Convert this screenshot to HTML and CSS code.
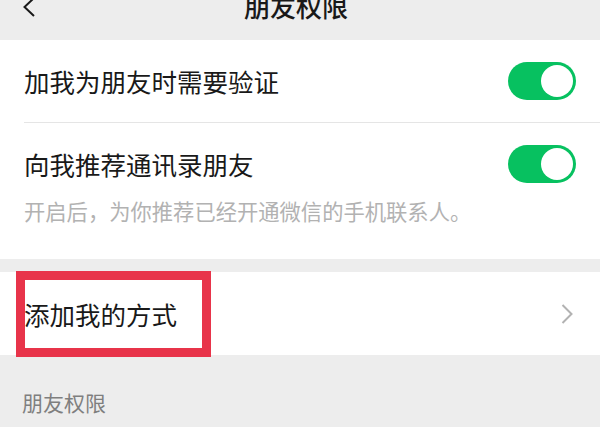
FILE: index.html
```html
<!DOCTYPE html>
<html lang="zh-CN">
<head>
<meta charset="utf-8">
<title>朋友权限</title>
<link rel="stylesheet" href="styles.css">
</head>
<body>
<div class="page">
  <header class="nav">
    <span class="nav-back">
      <svg width="14" height="20" viewBox="0 0 14 20"><path d="M12 1 L2.5 10 L12 19" fill="none" stroke="#191919" stroke-width="2"/></svg>
    </span>
    <h1 class="nav-title">朋友权限</h1>
    <span class="nav-side"></span>
  </header>

  <section class="group">
    <div class="cell cell-first">
      <span class="cell-label">加我为朋友时需要验证</span>
      <span class="switch"><span class="switch-knob"></span></span>
    </div>
    <div class="cell-multi">
      <div class="cell-line">
        <span class="cell-label">向我推荐通讯录朋友</span>
        <span class="switch"><span class="switch-knob"></span></span>
      </div>
      <p class="cell-desc">开启后，为你推荐已经开通微信的手机联系人。</p>
    </div>
  </section>

  <section class="group group-gap">
    <div class="cell cell-link">
      <span class="cell-label">添加我的方式</span>
      <svg class="arrow" width="12" height="20" viewBox="0 0 12 20"><path d="M1.5 1 L10.5 10 L1.5 19" fill="none" stroke="#b2b2b2" stroke-width="2"/></svg>
      <span class="highlight"></span>
    </div>
  </section>

  <div class="section-title">朋友权限</div>
</div>
</body>
</html>
```

FILE: styles.css
```css
* { box-sizing: border-box; }
html, body {
  margin: 0;
  padding: 0;
  background: #ededed;
  font-family: "Noto Sans CJK SC", "Noto Sans", sans-serif;
  color: #191919;
}
.page {
  width: 600px;
  height: 427px;
  overflow: hidden;
  background: #ededed;
}
.nav {
  height: 40px;
  display: grid;
  grid-template-columns: 1fr auto 1fr;
  align-items: center;
  padding: 0 0 30px 0;
}
.nav-back {
  display: flex;
  align-items: center;
  padding-left: 22px;
  height: 10px;
  margin-top: 2px;
}
.nav-title {
  margin: 0 8px 0 0;
  font-size: 26px;
  font-weight: 500;
  line-height: 26px;
  height: 10px;
  display: flex;
  align-items: center;
  color: #191919;
}
.group {
  background: #fff;
}
.group-gap {
  margin-top: 13px;
}
.cell {
  height: 83px;
  display: flex;
  align-items: center;
  justify-content: space-between;
  padding-right: 24px;
  margin-left: 24px;
}
.cell-first {
  border-bottom: 1px solid #e5e5e5;
}
.cell-label {
  font-size: 25.5px;
  line-height: 34px;
  color: #191919;
}
.cell-multi {
  padding: 22px 24px 34px 24px;
}
.cell-line {
  height: 38px;
  display: flex;
  align-items: center;
  justify-content: space-between;
}
.cell-desc {
  margin: 14px 0 0 0;
  font-size: 21.3px;
  line-height: 28px;
  color: #b2b2b2;
}
.switch {
  width: 68px;
  height: 38px;
  border-radius: 19px;
  background: #07c160;
  padding: 3px;
  display: flex;
  justify-content: flex-end;
  flex-shrink: 0;
}
.switch-knob {
  width: 32px;
  height: 32px;
  border-radius: 50%;
  background: #fff;
}
.cell-link {
  position: relative;
  padding-right: 27px;
}
.arrow {
  display: block;
}
.highlight {
  position: absolute;
  left: -8px;
  top: -1px;
  width: 195px;
  height: 86px;
  border: 9px solid #e8344a;
  pointer-events: none;
}
.section-title {
  padding: 33px 0 0 22px;
  font-size: 21px;
  line-height: 28px;
  color: #7f7f7f;
}
```
